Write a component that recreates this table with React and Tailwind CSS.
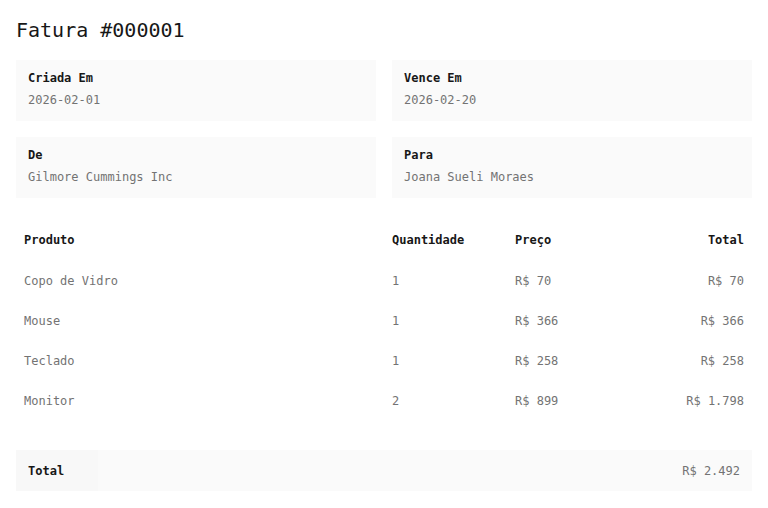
import React from 'react';

const itens = [
  { produto: 'Copo de Vidro', qtd: 1, preco: 'R$ 70', total: 'R$ 70' },
  { produto: 'Mouse', qtd: 1, preco: 'R$ 366', total: 'R$ 366' },
  { produto: 'Teclado', qtd: 1, preco: 'R$ 258', total: 'R$ 258' },
  { produto: 'Monitor', qtd: 2, preco: 'R$ 899', total: 'R$ 1.798' },
];

function Card({ label, value }) {
  return (
    <div className="bg-[#fafafa] px-3 pt-[10px] pb-[13px]">
      <div className="text-xs font-bold text-neutral-900 leading-4">{label}</div>
      <div className="mt-1.5 text-xs text-neutral-500 leading-4">{value}</div>
    </div>
  );
}

export default function App() {
  return (
    <div className="min-h-[508px] bg-white p-4 text-neutral-900" style={{ fontFamily: '"DejaVu Sans Mono", "Liberation Mono", monospace' }}>
      <h1 className="text-xl font-medium leading-7 mb-4">Fatura #000001</h1>

      <div className="grid grid-cols-2 gap-4">
        <Card label="Criada Em" value="2026-02-01" />
        <Card label="Vence Em" value="2026-02-20" />
        <Card label="De" value="Gilmore Cummings Inc" />
        <Card label="Para" value="Joana Sueli Moraes" />
      </div>

      {/* tabela de itens */}
      <div className="mt-[22px] text-xs">
        <div className="grid grid-cols-[368px_123px_1fr_1fr] font-bold text-neutral-900">
          <div className="px-2 pt-3 pb-[13px] leading-4">Produto</div>
          <div className="px-2 pt-3 pb-[13px] leading-4">Quantidade</div>
          <div className="px-2 pt-3 pb-[13px] leading-4">Preço</div>
          <div className="px-2 pt-3 pb-[13px] leading-4 text-right">Total</div>
        </div>
        {itens.map((it) => (
          <div key={it.produto} className="grid grid-cols-[368px_123px_1fr_1fr] text-neutral-500">
            <div className="px-2 py-3 leading-4">{it.produto}</div>
            <div className="px-2 py-3 leading-4">{it.qtd}</div>
            <div className="px-2 py-3 leading-4">{it.preco}</div>
            <div className="px-2 py-3 leading-4 text-right">{it.total}</div>
          </div>
        ))}
      </div>

      <div className="mt-[29px] flex text-xs h-[41px]">
        <div className="w-[82px] bg-[#f8f8f8] px-3 flex items-center font-bold text-neutral-900">Total</div>
        <div className="flex-1 bg-[#fafafa] px-3 flex items-center justify-end text-neutral-500">R$ 2.492</div>
      </div>
    </div>
  );
}
